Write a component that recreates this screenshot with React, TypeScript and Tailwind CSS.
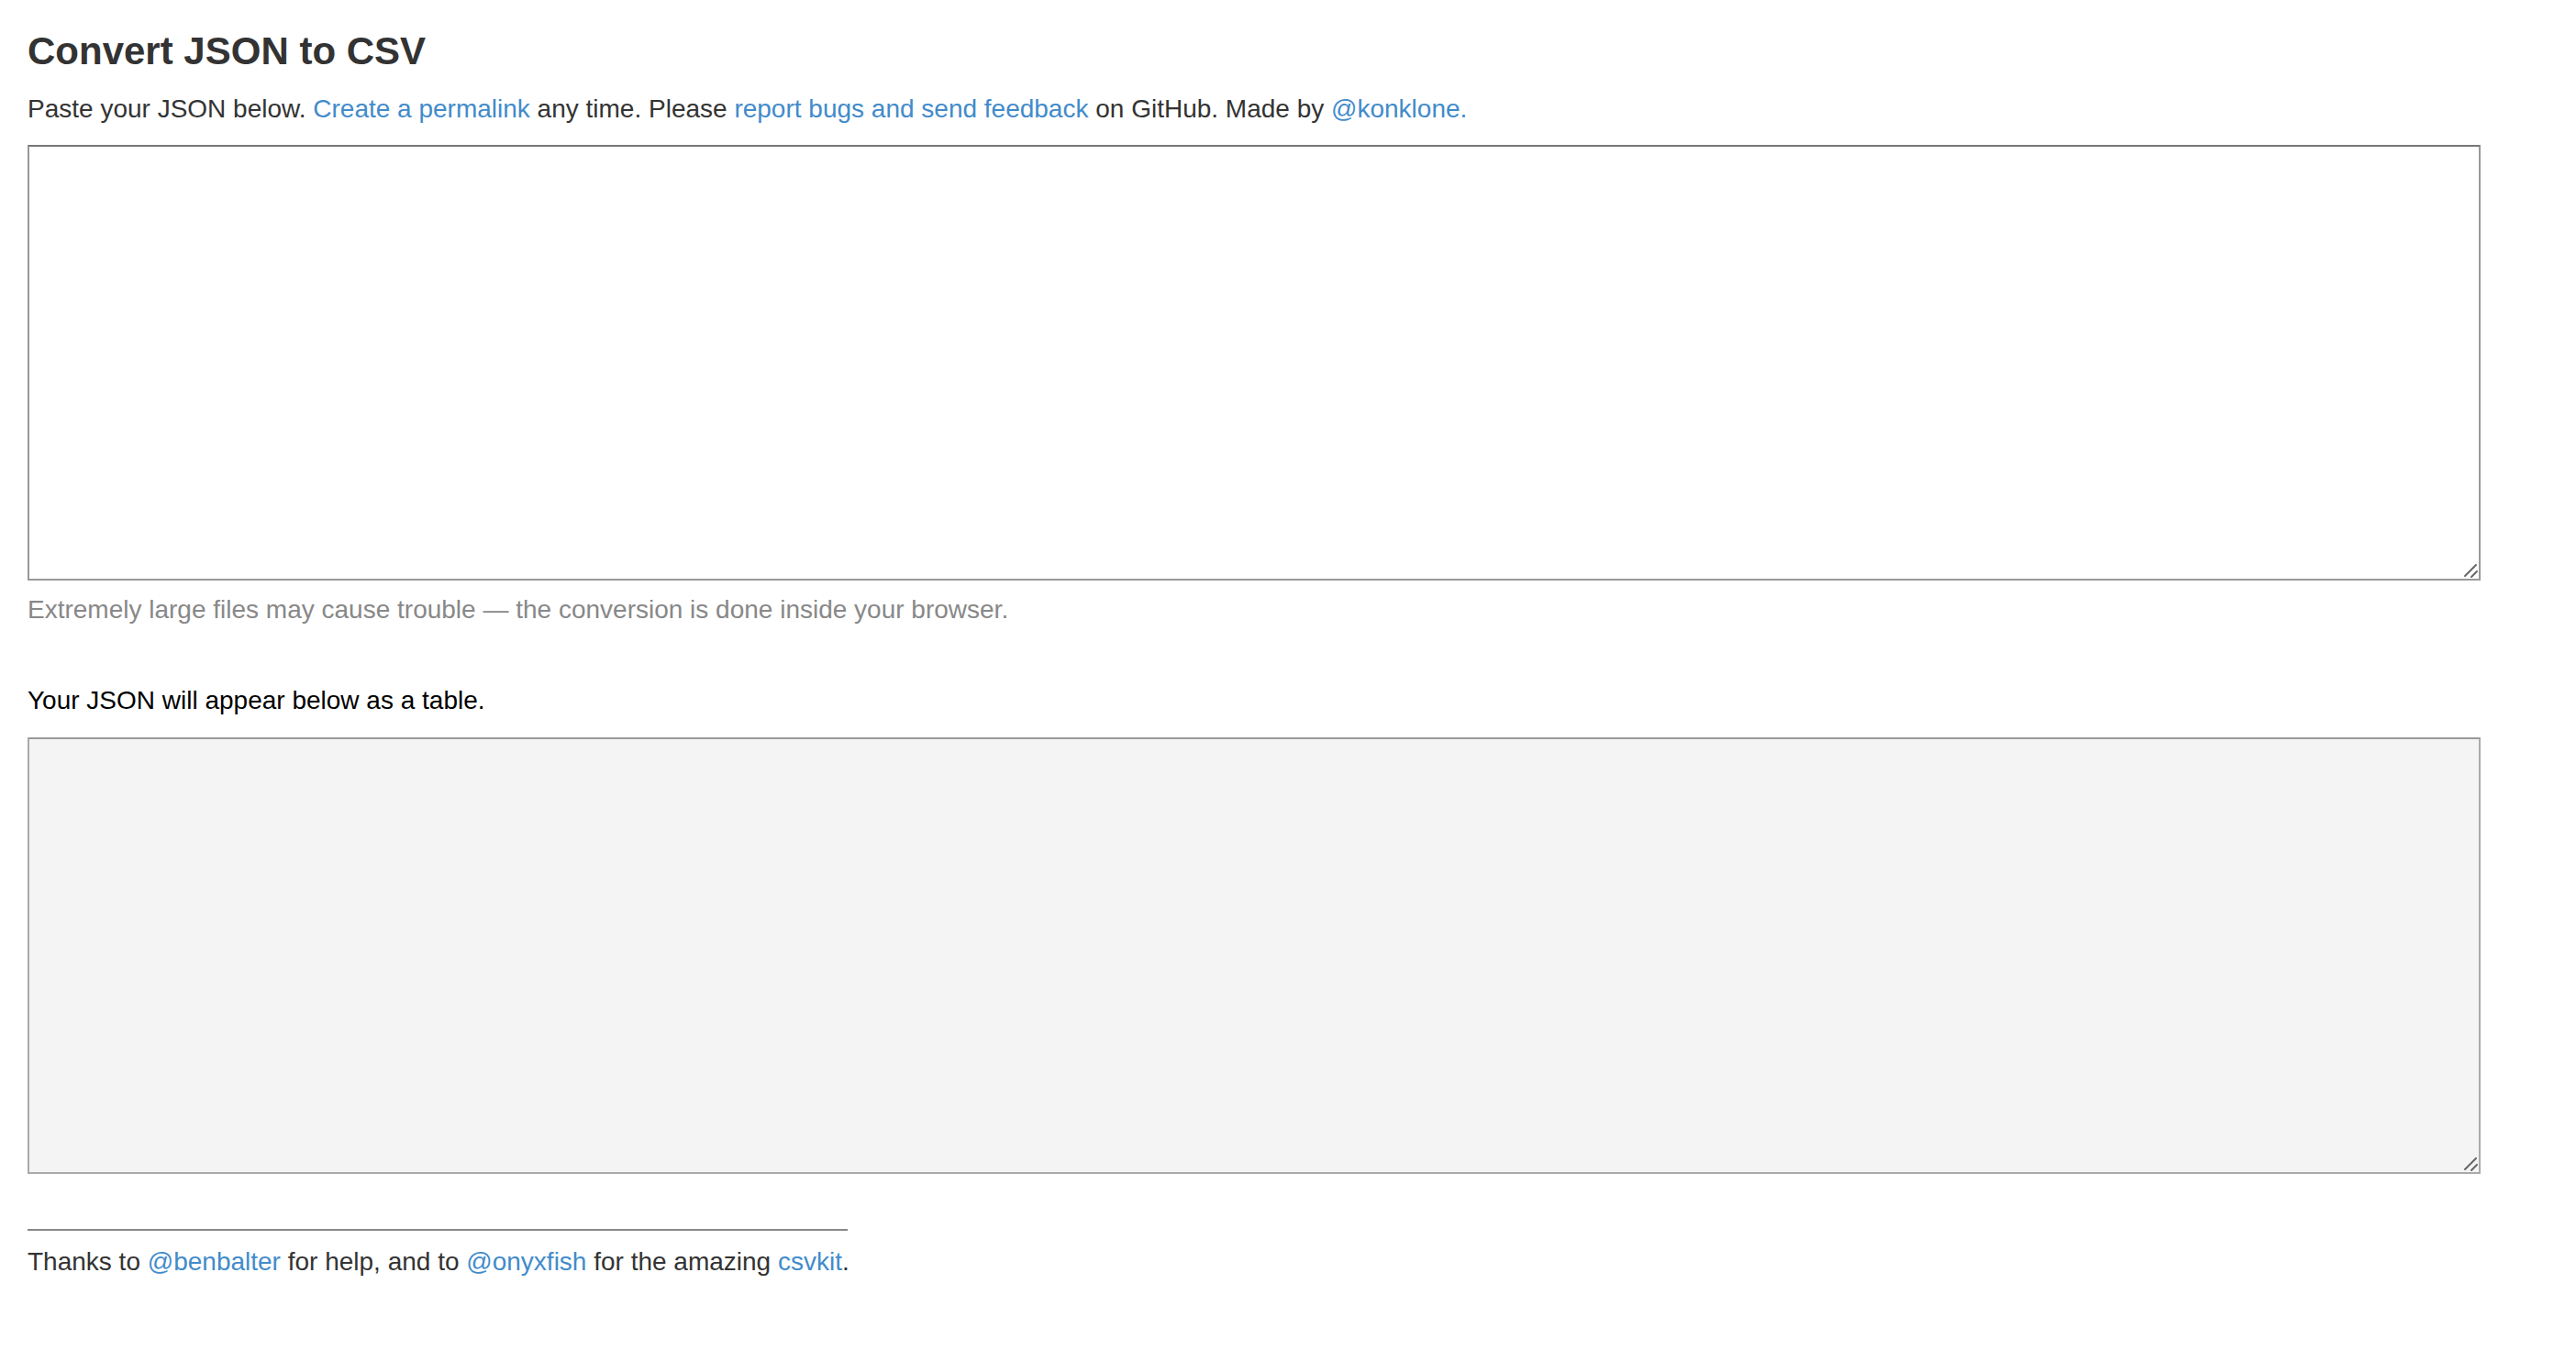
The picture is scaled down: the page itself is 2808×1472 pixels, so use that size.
import React from "react";

const font = { fontFamily: '"Liberation Sans", Arial, Helvetica, sans-serif' };

function A({ children }: { children: React.ReactNode }) {
  return (
    <a href="#" className="text-[#428bca] no-underline">
      {children}
    </a>
  );
}

function Grip() {
  return (
    <svg
      className="pointer-events-none absolute bottom-[2px] right-[2px]"
      width="18"
      height="18"
      viewBox="0 0 18 18"
    >
      <line x1="3" y1="15" x2="15" y2="3" stroke="#666" strokeWidth="2" strokeLinecap="round" />
      <line x1="10" y1="16" x2="16" y2="10" stroke="#666" strokeWidth="2" strokeLinecap="round" />
    </svg>
  );
}

export default function App() {
  return (
    <div
      className="min-h-[1472px] w-[2808px] bg-white pl-[30px] pt-[33px] text-[#333]"
      style={font}
    >
      <h1 className="m-0 text-[42px] font-bold leading-[45px] text-[#333]">
        Convert JSON to CSV
      </h1>
      <p className="mt-[21px] text-[28px] leading-[40px]">
        Paste your JSON below. <A>Create a permalink</A> any time. Please{" "}
        <A>report bugs and send feedback</A> on GitHub. Made by{" "}
        <A>@konklone.</A>
      </p>
      <div className="relative mt-[19px] w-[2674px]">
        <textarea
          className="block h-[475px] w-[2674px] resize-none border-2 border-[#999] border-t-[#777] bg-white outline-none"
          defaultValue=""
        />
        <Grip />
      </div>
      <p className="mt-[12px] text-[28px] leading-[40px] text-[#888]">
        Extremely large files may cause trouble — the conversion is done inside
        your browser.
      </p>
      <p className="mt-[59px] text-[28px] leading-[40px] text-black">
        Your JSON will appear below as a table.
      </p>
      <div className="relative mt-[20px] w-[2674px]">
        <textarea
          readOnly
          className="block h-[476px] w-[2674px] resize-none border-2 border-[#aaa] border-t-[#999] bg-[#f4f4f4] outline-none"
          defaultValue=""
        />
        <Grip />
      </div>
      <hr className="mt-[60px] h-0 w-[894px] border-0 border-t-2 border-[#888]" />
      <p className="mt-[14px] text-[28px] leading-[40px]">
        Thanks to <A>@benbalter</A> for help, and to <A>@onyxfish</A> for the
        amazing <A>csvkit</A>.
      </p>
    </div>
  );
}
